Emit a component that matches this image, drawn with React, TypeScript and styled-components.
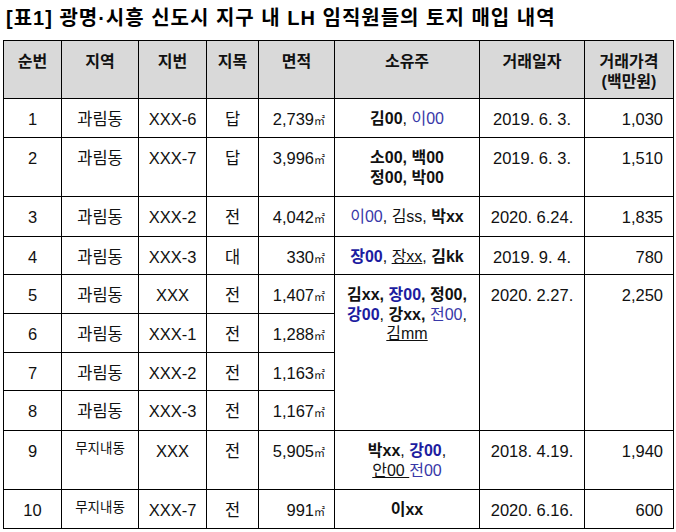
import React from "react";
import styled, { createGlobalStyle } from "styled-components";

const GlobalStyle = createGlobalStyle`
  html, body {
    margin: 0;
    padding: 0;
    background: #ffffff;
  }
  body {
    font-family: "Liberation Sans", "Noto Sans CJK KR", sans-serif;
    color: #111;
  }
`;

const Page = styled.div`
  width: 676px;
  height: 532px;
  padding: 6px 0 0 3px;
  box-sizing: border-box;
`;

const Title = styled.h1`
  margin: 0 0 10px 3px;
  font-size: 20px;
  line-height: 24px;
  font-weight: bold;
  color: #000;
  letter-spacing: 1px;
  white-space: nowrap;
`;

const Table = styled.table`
  border-collapse: collapse;
  table-layout: fixed;
  width: 670px;
  font-size: 16.5px;
`;

const Th = styled.th<{ $w: number }>`
  width: ${(p) => p.$w}px;
  background: #d9d9d9;
  border: 1px solid #000;
  font-weight: bold;
  font-size: 16px;
  text-align: center;
  vertical-align: top;
  padding: 11px 2px 0;
  line-height: 20px;
  height: 58px;
  box-sizing: border-box;
`;

const Td = styled.td<{ $align?: "left" | "center" | "right"; $h?: number; $small?: boolean }>`
  border: 1px solid #000;
  text-align: ${(p) => p.$align || "center"};
  vertical-align: top;
  padding: ${(p) => (p.$small ? "8px" : "10px")} ${(p) => (p.$align === "right" ? "10px" : "2px")} 0 2px;
  line-height: 20px;
  font-size: ${(p) => (p.$small ? "13.5px" : "16.5px")};
  height: ${(p) => p.$h || 39}px;
  box-sizing: border-box;
  white-space: nowrap;
`;

const OwnerCell = styled(Td)`
  font-size: 16px;
  line-height: 19.5px;
`;

const Owner = styled.span<{ $blue?: boolean; $bold?: boolean; $under?: boolean }>`
  color: ${(p) => (p.$blue ? (p.$bold ? "#1c1ca0" : "#3838a8") : "#111")};
  font-weight: ${(p) => (p.$bold ? "bold" : "normal")};
  text-decoration: ${(p) => (p.$under ? "underline" : "none")};
`;

const Unit = styled.span`
  font-size: 11px;
  letter-spacing: -1px;
`;

type Row = {
  no: string;
  area: string;
  lot: string;
  kind: string;
  size: string;
  h: number;
  smallArea?: boolean;
  owner?: React.ReactNode;
  date?: string;
  price?: string;
  span?: number;
};

const rows: Row[] = [
  {
    no: "1", area: "과림동", lot: "XXX-6", kind: "답", size: "2,739", h: 39,
    owner: (<><Owner $bold>김00</Owner>, <Owner $blue>이00</Owner></>),
    date: "2019. 6. 3.", price: "1,030",
  },
  {
    no: "2", area: "과림동", lot: "XXX-7", kind: "답", size: "3,996", h: 59,
    owner: (<><Owner $bold>소00, 백00</Owner><br /><Owner $bold>정00, 박00</Owner></>),
    date: "2019. 6. 3.", price: "1,510",
  },
  {
    no: "3", area: "과림동", lot: "XXX-2", kind: "전", size: "4,042", h: 40,
    owner: (<><Owner $blue>이00</Owner>, <Owner>김ss</Owner>, <Owner $bold>박xx</Owner></>),
    date: "2020. 6.24.", price: "1,835",
  },
  {
    no: "4", area: "과림동", lot: "XXX-3", kind: "대", size: "330", h: 38,
    owner: (<><Owner $blue $bold>장00</Owner>, <Owner $under>장xx</Owner>, <Owner $bold>김kk</Owner></>),
    date: "2019. 9. 4.", price: "780",
  },
  {
    no: "5", area: "과림동", lot: "XXX", kind: "전", size: "1,407", h: 39, span: 4,
    owner: (
      <>
        <Owner $bold>김xx, </Owner><Owner $blue $bold>장00</Owner><Owner $bold>, 정00,</Owner>
        <br />
        <Owner $blue $bold>강00</Owner>, <Owner $bold>강xx, </Owner><Owner $blue>전00</Owner>,
        <br />
        <Owner $under>김mm</Owner>
      </>
    ),
    date: "2020. 2.27.", price: "2,250",
  },
  { no: "6", area: "과림동", lot: "XXX-1", kind: "전", size: "1,288", h: 39 },
  { no: "7", area: "과림동", lot: "XXX-2", kind: "전", size: "1,163", h: 38 },
  { no: "8", area: "과림동", lot: "XXX-3", kind: "전", size: "1,167", h: 40 },
  {
    no: "9", area: "무지내동", lot: "XXX", kind: "전", size: "5,905", h: 59, smallArea: true,
    owner: (
      <>
        <Owner $bold>박xx</Owner>, <Owner $blue $bold>강00</Owner>,
        <br />
        <Owner $under>안00 </Owner><Owner $blue>전00</Owner>
      </>
    ),
    date: "2018. 4.19.", price: "1,940",
  },
  {
    no: "10", area: "무지내동", lot: "XXX-7", kind: "전", size: "991", h: 39, smallArea: true,
    owner: <Owner $bold>이xx</Owner>,
    date: "2020. 6.16.", price: "600",
  },
];

const headers: { label: React.ReactNode; w: number }[] = [
  { label: "순번", w: 58 },
  { label: "지역", w: 77 },
  { label: "지번", w: 68 },
  { label: "지목", w: 52 },
  { label: "면적", w: 76 },
  { label: "소유주", w: 145 },
  { label: "거래일자", w: 105 },
  { label: (<>거래가격<br />(백만원)</>), w: 89 },
];

const App: React.FC = () => {
  return (
    <Page>
      <GlobalStyle />
      <Title>[표1] 광명·시흥 신도시 지구 내 LH 임직원들의 토지 매입 내역</Title>
      <Table>
        <thead>
          <tr>
            {headers.map((h, i) => (
              <Th key={i} $w={h.w}>{h.label}</Th>
            ))}
          </tr>
        </thead>
        <tbody>
          {rows.map((r) => (
            <tr key={r.no}>
              <Td $h={r.h}>{r.no}</Td>
              <Td $h={r.h} $small={r.smallArea}>{r.area}</Td>
              <Td $h={r.h}>{r.lot}</Td>
              <Td $h={r.h}>{r.kind}</Td>
              <Td $h={r.h} $align="right">
                {r.size}<Unit>㎡</Unit>
              </Td>
              {r.owner !== undefined && (
                <>
                  <OwnerCell $h={r.h} rowSpan={r.span}>{r.owner}</OwnerCell>
                  <Td $h={r.h} rowSpan={r.span}>{r.date}</Td>
                  <Td $h={r.h} rowSpan={r.span} $align="right">{r.price}</Td>
                </>
              )}
            </tr>
          ))}
        </tbody>
      </Table>
    </Page>
  );
};

export default App;
